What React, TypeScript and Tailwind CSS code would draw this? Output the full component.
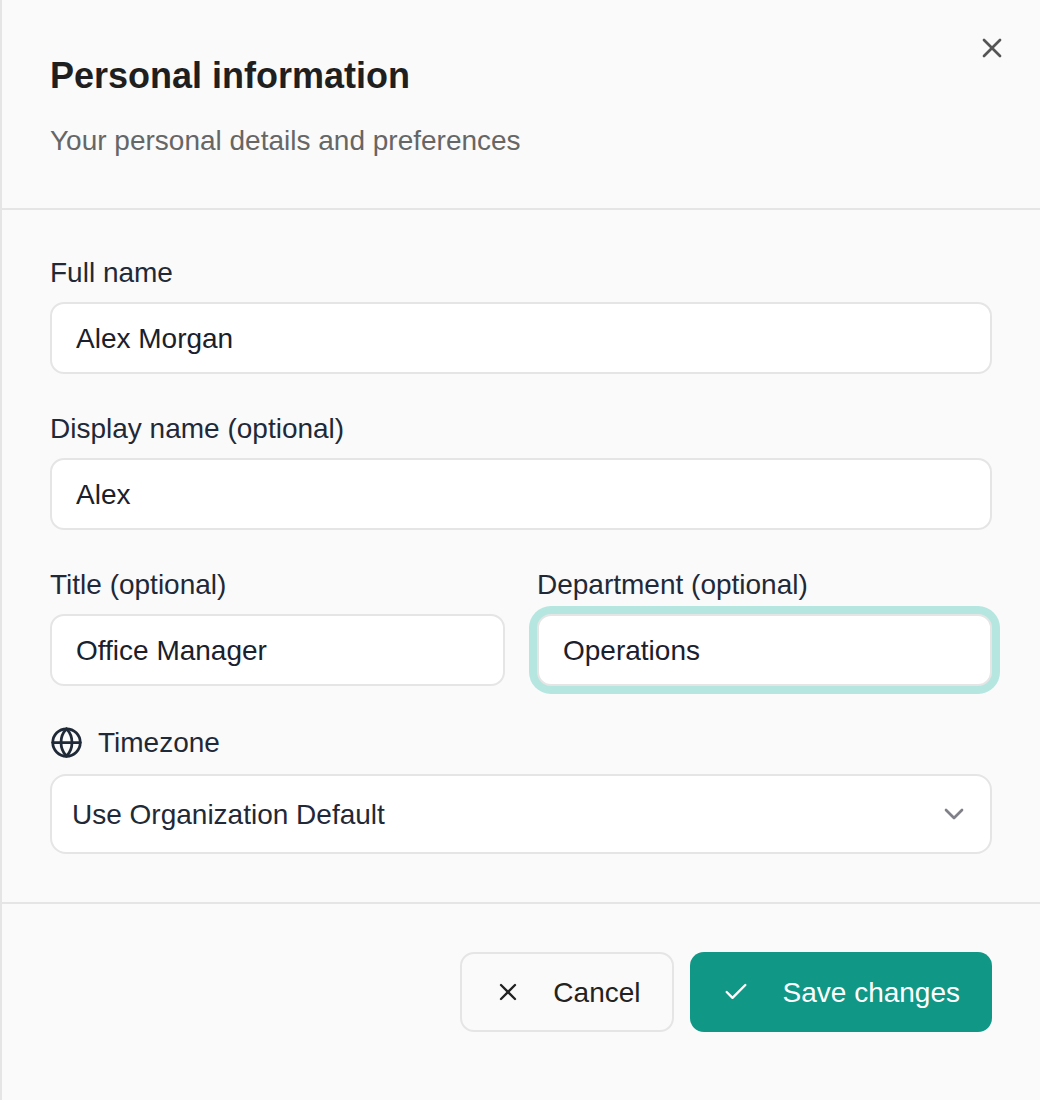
import { Check, ChevronDown, Globe, X } from "lucide-react";

const inputClass =
  "block h-[72px] w-full rounded-[14px] border-2 border-[#e5e5e5] bg-white px-6 pt-[2px] text-[28px] text-[#1a202c] outline-none";

function Field({ label, value, focused }: { label: string; value: string; focused?: boolean }) {
  return (
    <div className="min-w-0">
      <label className="mb-[6px] block text-[28px] leading-[46px] text-[#1f2937]">{label}</label>
      <input
        readOnly
        value={value}
        className={focused ? inputClass + " ring-8 ring-[#b5e6e0]" : inputClass}
      />
    </div>
  );
}

export default function App() {
  return (
    <div className="relative h-[1100px] w-[1040px] border-l-2 border-[#e5e5e5] bg-[#fafafa] font-['Liberation_Sans',Arial,sans-serif]">
      <button className="absolute right-8 top-8 text-[#555555]" aria-label="Close">
        <X size={32} />
      </button>

      <header className="border-b-2 border-[#e5e5e5] px-12 pb-[46px] pt-12">
        <h2 className="text-[36px] font-bold leading-[56px] text-[#1f1f1f]">Personal information</h2>
        <p className="mt-4 text-[28px] leading-[42px] text-[#666666]">Your personal details and preferences</p>
      </header>

      <div className="flex flex-col gap-8 px-12 pb-12 pt-10">
        <Field label="Full name" value="Alex Morgan" />
        <Field label="Display name (optional)" value="Alex" />
        <div className="grid grid-cols-2 gap-8">
          <Field label="Title (optional)" value="Office Manager" />
          <Field label="Department (optional)" value="Operations" focused />
        </div>
        <div>
          <div className="mb-2 flex h-12 items-center gap-[15px] text-[28px] text-[#1f2937]">
            <Globe size={33} />
            <span className="pt-[2px]">Timezone</span>
          </div>
          <div className="flex h-20 items-center justify-between rounded-[16px] border-2 border-[#e5e5e5] bg-white pl-5 pr-[20px] text-[28px] text-[#1f2937]">
            <span className="pt-[2px]">Use Organization Default</span>
            <ChevronDown size={32} className="text-[#808088]" />
          </div>
        </div>
      </div>

      <footer className="flex justify-end gap-4 border-t-2 border-[#e5e5e5] px-12 pt-12">
        <button className="flex h-20 items-center gap-[31px] rounded-[14px] border-2 border-[#e5e5e5] pl-8 pr-[31px] text-[28px] text-[#222222]">
          <X size={28} />
          <span className="pt-[2px]">Cancel</span>
        </button>
        <button className="flex h-20 items-center gap-[33px] rounded-[14px] bg-[#109786] pl-8 pr-8 text-[28px] text-white">
          <Check size={28} />
          <span className="pt-[2px]">Save changes</span>
        </button>
      </footer>
    </div>
  );
}
